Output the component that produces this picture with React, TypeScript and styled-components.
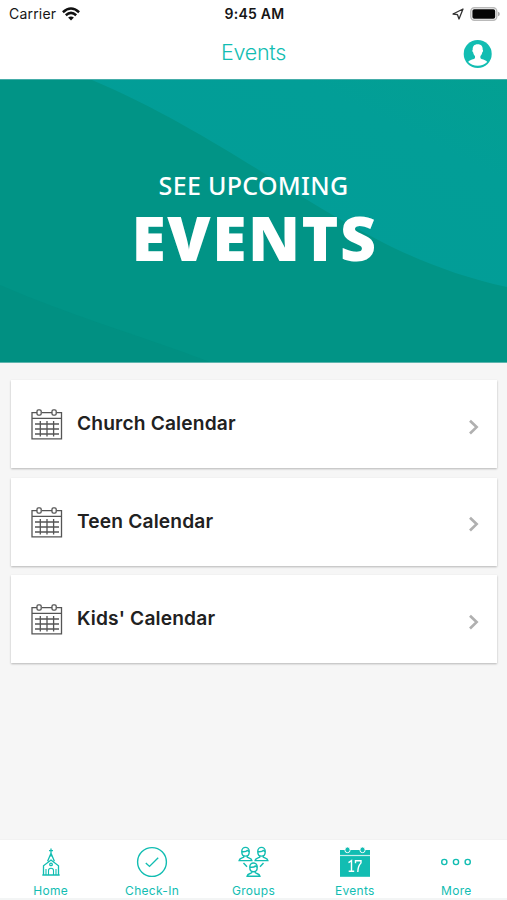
import React from 'react';
import styled, { createGlobalStyle } from 'styled-components';

const teal = '#12bdb2';

const GlobalStyle = createGlobalStyle`
  * { box-sizing: border-box; }
  body { margin: 0; background: #f6f6f6; font-family: Inter, "Liberation Sans", sans-serif; }
  svg { display: block; flex: none; }
`;

const Screen = styled.div`
  width: 507px;
  height: 900px;
  display: flex;
  flex-direction: column;
  background: #f6f6f6;
  overflow: hidden;
`;

const StatusBar = styled.div`
  display: grid;
  grid-template-columns: 1fr auto 1fr;
  align-items: start;
  height: 28px;
  padding: 0 7px 0 9px;
  background: #fff;
  color: #161616;
  font-size: 14px;
  line-height: 27px;
`;

const StatusGroup = styled.div<{ $end?: boolean }>`
  display: flex;
  align-items: center;
  justify-content: ${(p) => (p.$end ? 'flex-end' : 'flex-start')};
  gap: 6px;
  height: 27px;
  letter-spacing: 0.2px;
`;

const Clock = styled.span`
  font-weight: 600;
  letter-spacing: 0.25px;
`;

const Header = styled.header`
  display: grid;
  grid-template-columns: 1fr auto 1fr;
  align-items: center;
  height: 51px;
  padding: 0 14px;
  background: #fff;
`;

const Title = styled.h1`
  grid-column: 2;
  margin: 0 0 3px;
  color: ${teal};
  font-size: 21.5px;
  font-weight: 300;
  line-height: 48px;
  letter-spacing: -0.25px;
`;

const ProfileButton = styled.button`
  justify-self: end;
  margin: 1px 0 0;
  padding: 0;
  border: 0;
  background: none;
`;

const Hero = styled.section`
  display: grid;
  height: 284px;
  border-top: 1px solid #45ada9;
  border-bottom: 1px solid #5eb5ae;
  > * { grid-area: 1 / 1; }
`;

const HeroCaption = styled.div`
  z-index: 1;
  display: flex;
  flex-direction: column;
  align-items: center;
  padding-top: 90px;
  color: #fff;
  font-family: "Noto Sans", "Open Sans", sans-serif;
`;

const Kicker = styled.span`
  font-size: 25px;
  font-weight: 500;
  line-height: 30px;
  letter-spacing: 0.3px;
`;

const Headline = styled.span`
  margin-left: 2px;
  font-size: 62.5px;
  font-weight: 900;
  line-height: 74px;
  letter-spacing: 1.5px;
`;

const CardList = styled.main`
  flex: 1;
  display: flex;
  flex-direction: column;
  gap: 9.7px;
  padding: 17px 10px 0 11px;
`;

const Card = styled.a`
  display: flex;
  align-items: center;
  height: 88px;
  padding: 0 17px 0 20px;
  background: #fff;
  box-shadow: 0 1px 2px rgba(0, 0, 0, 0.26);
`;

const CardLabel = styled.span`
  flex: 1;
  margin: 0 0 1px 14px;
  color: #212121;
  font-size: 19.2px;
  font-weight: 600;
  line-height: 23px;
  letter-spacing: 0.15px;
`;

const TabBar = styled.nav`
  display: grid;
  grid-template-columns: repeat(5, 1fr);
  height: 61px;
  border-top: 1px solid #f2f2f2;
  border-bottom: 2px solid #f3f5f5;
  background: #fff;
`;

const Tab = styled.a`
  display: flex;
  flex-direction: column;
  align-items: center;
  padding-top: 6px;
  color: ${teal};
`;

const TabLabel = styled.span`
  margin-top: 5px;
  font-size: 12px;
  line-height: 16px;
  letter-spacing: 0.3px;
`;

const WifiIcon = () => (
  <svg width="18" height="14" viewBox="0 0 18 14" fill="none" stroke="#111" strokeWidth="2.5">
    <path d="M.9 5.2Q9-2.1 17.1 5.2M3.8 8.2Q9 3.5 14.2 8.2" />
    <path d="M9 13.4 6.1 10.6Q9 8.2 11.9 10.6Z" fill="#111" stroke="none" />
  </svg>
);

const LocationIcon = () => (
  <svg width="12" height="12" viewBox="0 0 12 12" fill="none" stroke="#333" strokeWidth="1.3" strokeLinejoin="round">
    <path d="M11 1 1 6l4.5.7L7 11Z" />
  </svg>
);

const BatteryIcon = () => (
  <svg width="30" height="14" viewBox="0 0 30 14">
    <rect x=".8" y=".8" width="26" height="12.4" rx="3.6" fill="#fff" stroke="#b9b9b9" strokeWidth="1.4" />
    <rect x="2.4" y="2.3" width="22.8" height="9.4" rx="1.8" fill="#050505" />
    <path d="M28 4.7Q29.8 5.3 29.8 7T28 9.3Z" fill="#aaa" />
  </svg>
);

const ProfileIcon = () => (
  <svg width="30" height="30" viewBox="0 0 30 30">
    <circle cx="14.7" cy="15" r="14" fill={teal} />
    <path
      d="M14.7 5.2c-3.6 0-5.2 2.2-5 5.5-.6.2-.5 1.9.5 2.8.3 1.8 1.1 2.9 1.8 3.5v1.9c-.7 1.5-5 1.3-6.8 4 2.2 2.3 5.7 3.9 9.5 3.9s7.3-1.6 9.5-3.9c-1.8-2.7-6.1-2.5-6.8-4V17c.7-.6 1.5-1.7 1.8-3.5 1-.9 1.1-2.6.5-2.8.2-3.3-1.4-5.5-5-5.5Z"
      fill="#fff"
    />
  </svg>
);

const HeroWaves = () => (
  <svg width="507" height="282" viewBox="0 0 507 282">
    <defs>
      <linearGradient id="wave" x1="0" y1="1" x2="1" y2="0">
        <stop offset="0" stopColor="#029c97" />
        <stop offset=".75" stopColor="#029e97" />
        <stop offset="1" stopColor="#03a092" />
      </linearGradient>
    </defs>
    <path d="M0 0h507v282H0Z" fill="#019486" />
    <path d="M92 0C160 29 215 63 262 92C360 153 420 188 507 207V0Z" fill="url(#wave)" />
    <path d="M0 205C66 234 136 254 210 282H0Z" fill="#019082" />
  </svg>
);

const CalendarIcon = () => (
  <svg width="32" height="32" viewBox="0 0 32 32" fill="none" stroke="#555" strokeWidth="1.3">
    <path d="M6 4.6H1v26.2h29.5V4.6h-5M11 4.6h10M1 10.4h29.5" />
    <rect x="6" y="1.8" width="4.2" height="5.4" rx="1.4" />
    <rect x="21" y="1.8" width="4.2" height="5.4" rx="1.4" />
    <path d="M4 16h24M4 21h24M4 26h24M9.3 13v15.5M16 13v15.5M22.6 13v15.5" />
  </svg>
);

const Chevron = styled(({ className }: { className?: string }) => (
  <svg className={className} width="12" height="18" viewBox="0 0 12 18" fill="none" stroke="#b0b0b0" strokeWidth="2.7">
    <path d="m2 2.7 6.6 6.4L2 15.5" />
  </svg>
))`
  margin-top: 5px;
`;

const HomeIcon = () => (
  <svg width="32" height="32" viewBox="0 0 32 32" fill="none" stroke={teal} strokeWidth="1.3">
    <path d="M16 2.5v8M14 4.7h4M16 7.2l-3.4 8M16 7.2l3.4 8M8.5 29V19.8L16 14l7.5 5.8V29M7.3 29h17.4" />
    <path d="M13.5 29v-4.5q0-2.2 2.5-2.2t2.5 2.2V29M11 29v-6M21 29v-6" strokeWidth="1.1" />
    <circle cx="16" cy="18.4" r="1.3" />
  </svg>
);

const CheckIcon = () => (
  <svg width="32" height="32" viewBox="0 0 32 32" fill="none" stroke={teal} strokeWidth="1.4">
    <circle cx="16" cy="16" r="14.4" />
    <path d="m9.8 17 3.7 3.4 8.7-8.6" />
  </svg>
);

const Person = ({ x, y }: { x: number; y: number }) => (
  <g transform={`translate(${x} ${y})`}>
    <path d="M-3.7 4.5v-.8a3.7 3.7 0 0 1 7.4 0v.8c0 2.4-1.6 4.2-3.7 4.2s-3.7-1.8-3.7-4.2ZM-3.5 4.2Q.7 4.6 1.8 3L3.5 4.2" />
    <path d="M-1.7 8.4v1.2C-2.5 10.8-6 10.4-6.4 13.2H6.4C6 10.4 2.5 10.8 1.7 9.6V8.4" />
  </g>
);

const GroupsIcon = () => (
  <svg width="32" height="32" viewBox="0 0 32 32" fill="none" stroke={teal} strokeWidth="1.4">
    <Person x={8.5} y={1.4} />
    <Person x={24.5} y={1.4} />
    <Person x={16.5} y={17} />
    <path d="m6.5 17 3.5 3.8M26.5 17l-3.5 3.8" />
  </svg>
);

const EventsIcon = () => (
  <svg width="32" height="32" viewBox="0 0 32 32">
    <path d="M1 4h30v26.8H1Z" fill={teal} />
    <path d="M1 9.5h30" stroke="#c9efec" strokeWidth="1.2" />
    <g fill={teal} stroke="#fff" strokeWidth="1">
      <rect x="6" y="1" width="5" height="5.6" rx="2.2" />
      <rect x="21" y="1" width="5" height="5.6" rx="2.2" />
    </g>
    <g fill="none" stroke="#fff" strokeWidth="1.4">
      <path d="m9.5 16.6 3-2v10.6M9.7 25.3h5.5M16.5 17.2v-2.4h5.5v2.1Q18.8 20.5 18.8 26" />
    </g>
  </svg>
);

const MoreIcon = () => (
  <svg width="32" height="32" viewBox="0 0 32 32" fill="none" stroke={teal} strokeWidth="1.4">
    <circle cx="4.3" cy="16" r="2.6" />
    <circle cx="16" cy="16" r="2.6" />
    <circle cx="27.7" cy="16" r="2.6" />
  </svg>
);

const calendars = ['Church Calendar', 'Teen Calendar', "Kids' Calendar"];

const tabs = [
  { label: 'Home', Icon: HomeIcon },
  { label: 'Check-In', Icon: CheckIcon },
  { label: 'Groups', Icon: GroupsIcon },
  { label: 'Events', Icon: EventsIcon },
  { label: 'More', Icon: MoreIcon },
];

export default function App() {
  return (
    <>
      <GlobalStyle />
      <Screen>
        <StatusBar>
          <StatusGroup>
            <span>Carrier</span>
            <WifiIcon />
          </StatusGroup>
          <Clock>9:45 AM</Clock>
          <StatusGroup $end>
            <LocationIcon />
            <BatteryIcon />
          </StatusGroup>
        </StatusBar>
        <Header>
          <Title>Events</Title>
          <ProfileButton aria-label="Profile">
            <ProfileIcon />
          </ProfileButton>
        </Header>
        <Hero>
          <HeroWaves />
          <HeroCaption>
            <Kicker>SEE UPCOMING</Kicker>
            <Headline>EVENTS</Headline>
          </HeroCaption>
        </Hero>
        <CardList>
          {calendars.map((name) => (
            <Card key={name}>
              <CalendarIcon />
              <CardLabel>{name}</CardLabel>
              <Chevron />
            </Card>
          ))}
        </CardList>
        <TabBar>
          {tabs.map(({ label, Icon }) => (
            <Tab key={label}>
              <Icon />
              <TabLabel>{label}</TabLabel>
            </Tab>
          ))}
        </TabBar>
      </Screen>
    </>
  );
}
